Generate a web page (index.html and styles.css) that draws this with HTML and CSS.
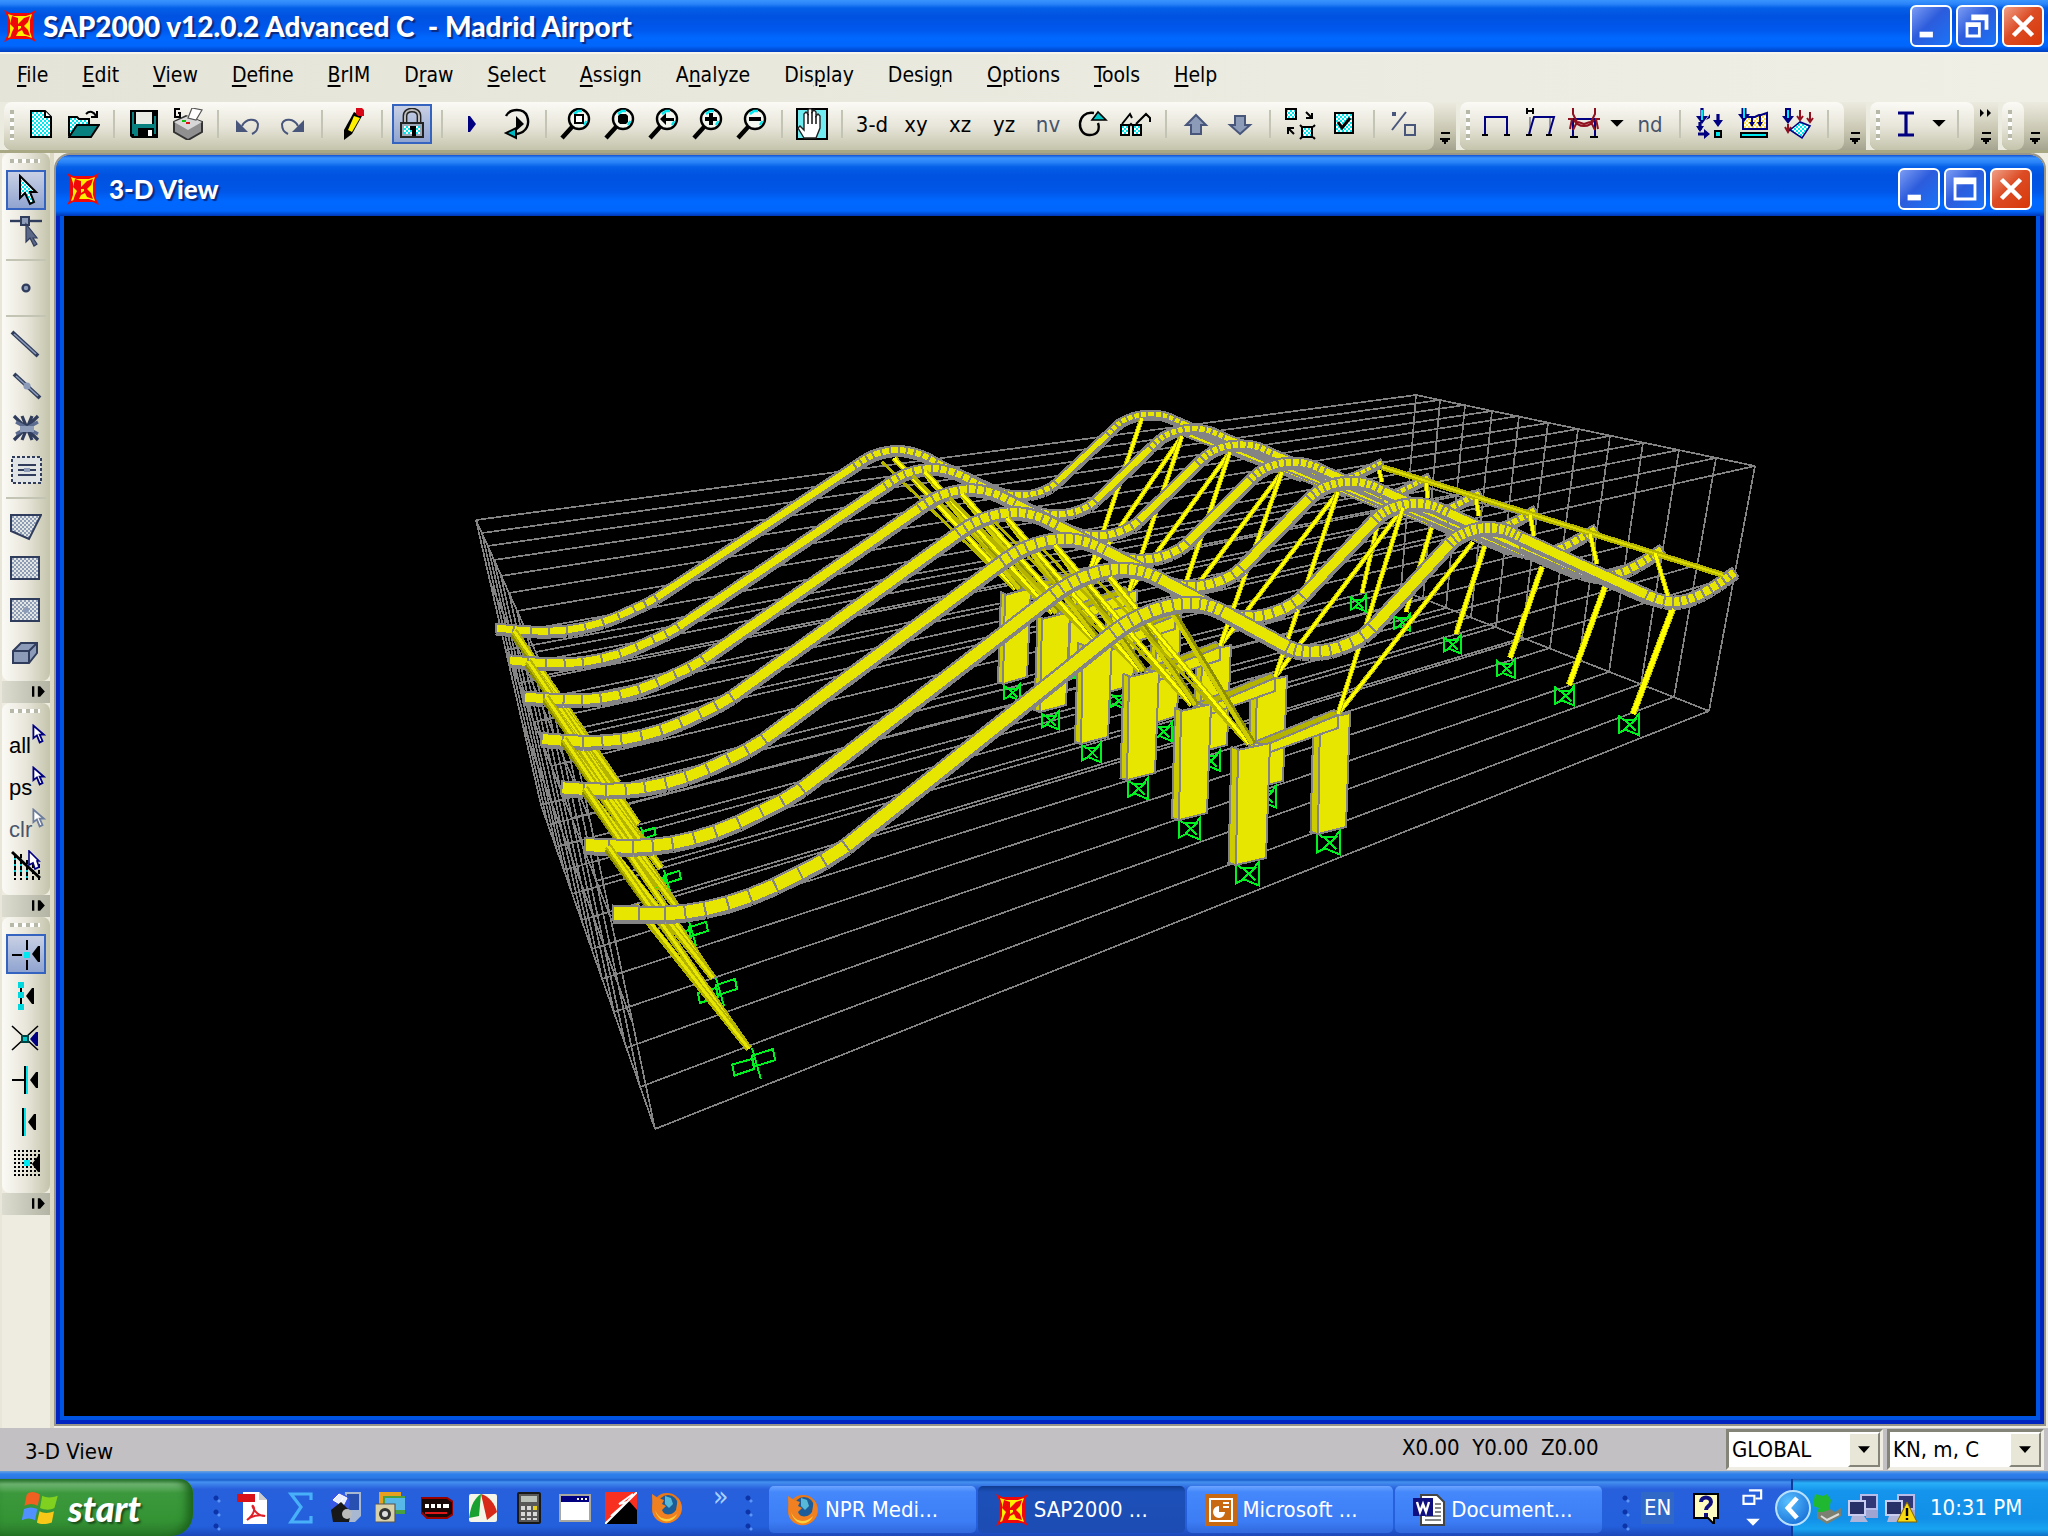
FILE: index.html
```html
<!DOCTYPE html>
<html lang="en">
<head>
    <meta charset="UTF-8">
    <title>SAP2000 - Madrid Airport</title>
    <link rel="stylesheet" href="styles.css">
</head>
<body>
    <!-- shared icon parts -->
    <svg class="defs" width="0" height="0" aria-hidden="true">
        <defs>
            <pattern id="cyan" width="2" height="2" patternUnits="userSpaceOnUse"><rect width="2" height="2" fill="#fff"/><path d="M0 0h1v1H0zM1 1h1v1H1z" fill="#00e8f0"/></pattern>
            <pattern id="gray" width="2" height="2" patternUnits="userSpaceOnUse"><rect width="2" height="2" fill="#e4e6e2"/><path d="M0 0h1v1H0zM1 1h1v1H1z" fill="#8c9cb8"/></pattern>
            <pattern id="yel" width="2" height="2" patternUnits="userSpaceOnUse"><rect width="2" height="2" fill="#fff"/><path d="M0 0h1v1H0zM1 1h1v1H1z" fill="#ffe040"/></pattern>
            <symbol id="sap" viewBox="0 0 16 16">
                <path d="M0 0l3 1.500h10L16 0l-1.500 3v10L16 16l-3-1.500H3L0 16l1.500-3V3z" fill="#f00808"/>
                <path d="M2 2l3 1h6l3-1-1 3v6l1 3-3-1H5l-3 1 1-3V5z" fill="#fff000"/>
                <path d="M4 3l3 1v3l3-3 3-1-1 3-2 2 2 2 1 3-3-1-1-2-2 1-1 2-3 1 1-3 1-2-2-2z" fill="#f00808"/>
                <path d="M7 8h1.500v1L7 10z" fill="#fff000"/>
            </symbol>
            <symbol id="mag" viewBox="0 0 16 16">
                <circle cx="9.500" cy="5.500" r="5" fill="#f4f6f0" stroke="#000" stroke-width="1.200"/>
                <path d="M7 3l2-1.500h2M12 8.500l1.200-2" fill="none" stroke="#00e8f0" stroke-width="1.200"/>
                <path d="M6 9.500L1 15" stroke="#000" stroke-width="2.200"/>
            </symbol>
            <symbol id="cursor" viewBox="0 0 10 14">
                <path d="M1 1v9l2.500-2 2 5 2-1-2-4.500H8.500z" fill="#fff" stroke="currentColor" stroke-width="1.300"/>
            </symbol>
            <symbol id="fox" viewBox="0 0 16 16">
                <circle cx="8" cy="8" r="7.500" fill="#e87818"/>
                <circle cx="8.500" cy="6.500" r="5" fill="#1c5c98"/>
                <path d="M7 2l3 1 1 3-2 2-2-2z" fill="#58b8d8"/>
                <path d="M0.500 1l3 2 3 1-1 2 2 1-2 2c1 3 5 3 7 0l1-6c3 4 2 9-2 11.500S2 15 .800 10.500z" fill="#f08020"/>
                <path d="M2 9c2 5 7 6 11 2-2 5-9 5.500-11-2z" fill="#f8d040"/>
            </symbol>
            <symbol id="over" viewBox="0 0 12 18"><path d="M2 2h9v2H2zM1 8h10v2H9v2H7v2H5v-2H3v-2H1z"/></symbol>
            <symbol id="pcs" viewBox="0 0 16 16">
                <path d="M6 1h9v8H6z" fill="#b8bce8"/><path d="M7 2h7v6H7z" fill="#303878"/>
                <path d="M9 9h6v4H9z" fill="#a0a4d0"/>
                <path d="M0 4h9v8H0z" fill="#c8ccf0"/><path d="M1 5h7v6H1z" fill="#283068"/>
                <path d="M2 12h6l2 3H1z" fill="#b0b4d8"/>
            </symbol>
        </defs>
    </svg>

    <header class="titlebar">
        <svg class="ico"><use href="#sap"/></svg>
        <h1>SAP2000 v12.0.2 Advanced C &nbsp;- Madrid Airport</h1>
        <button class="cap" aria-label="Minimize"><svg viewBox="0 0 20 20"><path d="M4 13h7v3H4z"/></svg></button>
        <button class="cap" aria-label="Restore"><svg viewBox="0 0 20 20"><path d="M7 4h9v8h-2V7H7zM4 8h8v8H4zM5.500 10.500v4h5v-4z" fill-rule="evenodd"/></svg></button>
        <button class="cap close" aria-label="Close"><svg viewBox="0 0 20 20"><path d="M5 5l10 10M15 5L5 15" stroke="#fff" stroke-width="2.400"/></svg></button>
    </header>

    <nav class="menubar">
        <button><u>F</u>ile</button>
        <button><u>E</u>dit</button>
        <button><u>V</u>iew</button>
        <button><u>D</u>efine</button>
        <button><u>B</u>rIM</button>
        <button>D<u>r</u>aw</button>
        <button><u>S</u>elect</button>
        <button><u>A</u>ssign</button>
        <button>A<u>n</u>alyze</button>
        <button>Dis<u>p</u>lay</button>
        <button>Desi<u>g</u>n</button>
        <button><u>O</u>ptions</button>
        <button><u>T</u>ools</button>
        <button><u>H</u>elp</button>
    </nav>

    <div class="toolbars">
        <div class="toolbar">
            <div class="tools">
                <i class="grip"></i>
                <button aria-label="New"><svg viewBox="0 0 16 16"><path d="M3.500 1.500h7l3 3v10h-10z" fill="url(#cyan)" stroke="#000"/><path d="M10.500 1.500v3h3" fill="#fff" stroke="#000"/></svg></button>
                <button aria-label="Open"><svg viewBox="0 0 16 16"><path d="M.500 14V4.500h4l1 1h5V9" fill="url(#cyan)" stroke="#000"/><path d="M.500 14.500l4-6h11l-4 6z" fill="#088080" stroke="#000"/><path d="M9 3c2-2 4-1 5 1M14.500 1.500v3h-3" fill="none" stroke="#000"/></svg></button>
                <i class="sep"></i>
                <button aria-label="Save"><svg viewBox="0 0 16 16"><path d="M1 1h14v14H2l-1-1z"/><path d="M2 2h1v11H2zM13 4h1v9h-1zM3 8h10v2H3zM3 10h2v4H3z" fill="#088080"/><path d="M4 2h8v6H4z" fill="#e8ebe4"/><path d="M10 11h2v3h-2z" fill="#fff"/></svg></button>
                <button aria-label="Print graphics"><svg viewBox="0 0 16 16"><path d="M1 7l6-3 8 3v5l-7 4-7-4z" fill="#909090" stroke="#333"/><path d="M1 7l7 4 7-4-7-3z" fill="#d8d8d8"/><path d="M8 5l2-5 5 1-3 5z" fill="#fff" stroke="#555" stroke-width=".6"/><path d="M7 7h2v1H7z" fill="#e01010"/><path d="M5 6h2v1H5z" fill="#10c010"/><path d="M4 .500H1.500v4H4v-2H3" fill="none" stroke="#000"/></svg></button>
                <i class="sep"></i>
                <button aria-label="Undo"><svg viewBox="0 0 16 16"><path d="M2 6v6h6z" fill="#48567c"/><path d="M5 9c2-4 7-4 8-1 0 3-1 4-3 5" fill="none" stroke="#48567c"/></svg></button>
                <button aria-label="Redo"><svg viewBox="0 0 16 16"><path d="M14 6v6H8z" fill="#48567c"/><path d="M11 9C9 5 4 5 3 8c0 3 1 4 3 5" fill="none" stroke="#48567c"/></svg></button>
                <i class="sep"></i>
                <button aria-label="Refresh window"><svg viewBox="0 0 16 16"><path d="M9 2l4 2-5 9-4 3V11z"/><path d="M9 4l3 1-4 7-2-1z" fill="#fff000"/><path d="M10 0h3l1 1v3h-3l-1-1z" fill="#d80818"/></svg></button>
                <i class="sep"></i>
                <button class="on" aria-label="Lock model"><svg viewBox="0 0 16 16"><path d="M4.500 8V4c0-4 7-4 7 0v4" fill="none" stroke="#222" stroke-width="2.400"/><path d="M4.500 8V4c0-4 7-4 7 0v4" fill="none" stroke="#bbb"/><path d="M2.500 7.500h11v7h-11z" fill="#9aa8b8" stroke="#222"/><path d="M4 9h8v4H4z" fill="url(#cyan)"/><path d="M7 9h3v5H8v-3H7z"/></svg></button>
                <i class="sep"></i>
                <button aria-label="Run analysis"><svg viewBox="0 0 16 16"><path d="M6 4h1l3 4-3 4H6z" fill="#000080"/></svg></button>
                <button aria-label="Run animation"><svg viewBox="0 0 16 16"><path d="M3 4c2-4 9-4 10.500 0s0 8-5 9" fill="none" stroke="#000" stroke-width="1.200"/><path d="M8 4l4 4-4 3.500z"/><path d="M8 10v5l-5-2.500z" fill="#00b8c0" stroke="#000"/></svg></button>
                <i class="sep"></i>
                <button aria-label="Rubber band zoom"><svg><use href="#mag"/><path transform="scale(2)" d="M7.500 3.500h4v4h-4z" fill="#fff" stroke="#000"/></svg></button>
                <button aria-label="Restore full view"><svg><use href="#mag"/><path transform="scale(2)" d="M8 3h3l1 1v3l-1 1H8L7 7V4z"/></svg></button>
                <button aria-label="Restore previous zoom"><svg><use href="#mag"/><path transform="scale(2)" d="M6 5.500L9 2.500V5h4v1.500H9v2z"/></svg></button>
                <button aria-label="Zoom in"><svg><use href="#mag"/><path transform="scale(2)" d="M6.500 4.500h2v-2h2v2h2v2h-2v2h-2v-2h-2z"/></svg></button>
                <button aria-label="Zoom out"><svg><use href="#mag"/><path transform="scale(2)" d="M6.500 4.500h6v2h-6z"/></svg></button>
                <i class="sep"></i>
                <button aria-label="Pan"><svg viewBox="0 0 16 16"><path d="M.500 .500h15v15H.500z" fill="#70ecf0" stroke="#000"/><path d="M4 15l-3-5 1-1 2 2V3l1-1 1 1V1l1-1 1 1v1l1-1 1 1v2l1-1 1 1v6l-2 5z" fill="#fff" stroke="#222" stroke-width=".7"/><path d="M6 3v5M8 2v6M10 4v4" stroke="#000" stroke-width=".7"/></svg></button>
                <i class="sep"></i>
                <button>3-d</button>
                <button>xy</button>
                <button>xz</button>
                <button>yz</button>
                <button class="dim">nv</button>
                <button aria-label="Rotate 3D view"><svg viewBox="0 0 16 16"><path d="M9 2.500C0 1 0 14 7 13.500c4 0 5-3 4-6" fill="none" stroke="#000" stroke-width="1.200"/><path d="M8 6l3-4 4 4z" fill="#00c8c8" stroke="#000" stroke-width=".8"/></svg></button>
                <button aria-label="Perspective toggle"><svg viewBox="0 0 16 16"><path d="M1 8l4-5 1 2M8 8l5-5 2 2v2M4.500 9l1-1 1 1" fill="none" stroke="#000"/><path d="M.500 8.500h4v5h-4zM6.500 8.500h4v5h-4z" fill="url(#cyan)" stroke="#000"/></svg></button>
                <i class="sep"></i>
                <button aria-label="Move up in list"><svg viewBox="0 0 16 16"><path d="M8 3.500l5 5h-2.500V13h-5V8.500H3z" fill="#8c9cb8" stroke="#48567c"/></svg></button>
                <button aria-label="Move down in list"><svg viewBox="0 0 16 16"><path d="M8 13l5-4.500h-2.500V4h-5v4.500H3z" fill="#8c9cb8" stroke="#48567c"/></svg></button>
                <i class="sep"></i>
                <button aria-label="Object shrink toggle"><svg viewBox="0 0 16 16"><path d="M1 .500h5v5H1zM9 9.500h5v5H9z" fill="url(#cyan)" stroke="#000"/><path d="M11 2l3 3M14 2.500V5h-3M2 10l3 3M2 13V10h3M8 8.500l1 1M15.500 8.500l-1 1M8 15.500l1-1M15.500 15.500l-1-1" fill="none" stroke="#000"/></svg></button>
                <button aria-label="Set display options"><svg viewBox="0 0 16 16"><path d="M3.500 2.500h9v10h-9z" fill="url(#cyan)" stroke="#000"/><path d="M5 7l2 3 4-5" fill="none" stroke="#000" stroke-width="1.500"/></svg></button>
                <i class="sep"></i>
                <button aria-label="Assign to group"><svg viewBox="0 0 16 16"><path d="M2 11l7-9" stroke="#48567c"/><path d="M2 2h2v2H2z" fill="#48567c"/><path d="M8.500 8.500h5v5h-5z" fill="none" stroke="#48567c"/></svg></button>
            </div>
            <button class="over" aria-label="Toolbar options"><svg><use href="#over"/></svg></button>
        </div>
        <div class="toolbar">
            <div class="tools">
                <i class="grip"></i>
                <button aria-label="Show undeformed shape"><svg viewBox="0 0 16 16"><path d="M2.500 13V4.500h11V13" fill="none" stroke="#000080"/><path d="M1 13h3v1H1zM12 13h3v1h-3z"/></svg></button>
                <button aria-label="Show deformed shape"><svg viewBox="0 0 16 16"><path d="M3 4.500V13M13 5v8" stroke="#999"/><path d="M2.500 13L5 4.500h10L12.500 13" fill="none" stroke="#000080"/><path d="M1 13h3v1H1zM11 13h3v1h-3zM1 0h1v3H1zM4 0h1v3H4zM1 1h4v1H1z"/></svg></button>
                <button aria-label="Show forces"><svg viewBox="0 0 16 16"><path d="M2.500 14V5.500h11V14" fill="none" stroke="#000080"/><path d="M2.500 0v3l2 4-2 4M13.500 0v3l-2 4 2 4M0 5.500h2l-1 5M16 5.500h-2l1 5M3 6c2 4 8 4 10 0M5 7l3 1 3-1" fill="none" stroke="#901020"/><path d="M1 14h4v1H1zM11 14h4v1h-4z"/></svg></button>
                <button class="drop" aria-label="Force options"><svg viewBox="0 0 10 6"><path d="M0 0h10L5 5z"/></svg></button>
                <button class="dim">nd</button>
                <i class="sep"></i>
                <button aria-label="Joint loads"><svg viewBox="0 0 16 16"><path d="M4 0v5M12 3v5M3 7v4M2 13h4" stroke="#000080" stroke-width="1.600"/><path d="M1 4h6L4 8zM9.500 6h5L12 9.500zM1 9h4l-2 3zM5 10.500l3 2.500-3 2.500zM6 6l2-3v2z" fill="#000080"/><path d="M4 1v5" stroke="#00e8f0"/><path d="M10.500 11.500h3v3h-3z" fill="#00e8f0" stroke="#000"/></svg></button>
                <button aria-label="Frame loads"><svg viewBox="0 0 16 16"><path d="M2.500 4.500h6l2-1 1 0 3-1v8h-12z" fill="url(#yel)" stroke="#000080"/><path d="M3 0v4" stroke="#000080" stroke-width="2.500"/><path d="M7 4v5M11 4v5" stroke="#000080"/><path d="M0 3h6L3 7zM5.500 7h3L7 9.500zM9.500 7h3L11 9.500z" fill="#000080"/><path d="M3 0v5" stroke="#00e8f0"/><path d="M1.500 12.500h13v2h-13z" fill="#00e8f0" stroke="#000"/></svg></button>
                <button aria-label="Area loads"><svg viewBox="0 0 16 16"><path d="M3 0v4" stroke="#000080" stroke-width="3"/><path d="M0 4h6L3 8z" fill="#000080"/><path d="M3 1v4" stroke="#00e8f0"/><path d="M9 1v5M14 2v5M7.500 4L9 6l1.500-2M12.500 5L14 7l1.500-2M3 8v4M1.500 9.500L3 12l1.500-2.500" fill="none" stroke="#901020"/><path d="M4 11l5-4 5 2-4 6z" fill="url(#cyan)" stroke="#000080" stroke-width=".8"/></svg></button>
                <i class="sep"></i>
            </div>
            <button class="over" aria-label="Toolbar options"><svg><use href="#over"/></svg></button>
        </div>
        <div class="toolbar">
            <div class="tools">
                <i class="grip"></i>
                <button aria-label="Steel frame design"><svg viewBox="0 0 16 16"><path d="M4 2.500h8M4 13.500h8M8 2v12" stroke="#000080" stroke-width="1.600"/></svg></button>
                <button class="drop" aria-label="Design options"><svg viewBox="0 0 10 6"><path d="M0 0h10L5 5z"/></svg></button>
                <i class="sep"></i>
            </div>
            <button class="over more" aria-label="More tools"><svg class="dbl" viewBox="0 0 12 8"><path d="M0 0l4 4-4 4zM7 0l4 4-4 4z"/></svg><svg><use href="#over"/></svg></button>
        </div>
        <div class="toolbar">
            <div class="tools"><i class="grip"></i></div>
            <button class="over" aria-label="Toolbar options"><svg><use href="#over"/></svg></button>
        </div>
    </div>

    <div class="work">
        <aside class="side">
            <div class="vbar">
                <i class="grip"></i>
                <button class="on" aria-label="Select"><svg viewBox="0 0 16 16"><path d="M5 1v11l2.500-2.500L10 15l2-1-2-5h3z" fill="url(#cyan)" stroke="#000"/></svg></button>
                <button aria-label="Reshape object"><svg viewBox="0 0 16 16"><path d="M0 2.500h16" stroke="#303c5c" stroke-width="1.200"/><path d="M5.500 .500h4v4h-4z" fill="#8c9cb8" stroke="#303c5c"/><path d="M8 4v9l2-2 2 4 1.500-1-2-3h2z" fill="#5c6888" stroke="#303c5c" stroke-width=".6"/></svg></button>
                <i class="sep"></i>
                <button aria-label="Draw joint"><svg viewBox="0 0 16 16"><circle cx="8" cy="8" r="1.700" fill="#8c9cb8" stroke="#303c5c" stroke-width="1.200"/></svg></button>
                <i class="sep"></i>
                <button aria-label="Draw frame"><svg viewBox="0 0 16 16"><path d="M1 2l13 12" stroke="#303c5c" stroke-width="2"/><path d="M2 3l11 10" stroke="#8c9cb8" stroke-width=".8"/></svg></button>
                <button aria-label="Quick draw frame"><svg viewBox="0 0 16 16"><path d="M2 2l13 12" stroke="#303c5c" stroke-width="2"/><path d="M3 3l11 10" stroke="#8c9cb8" stroke-width=".8"/><circle cx="8.500" cy="8" r="1.800" fill="#8c9cb8"/></svg></button>
                <button aria-label="Quick draw braces"><svg viewBox="0 0 16 16"><path d="M2 2l12 12M14 2L2 14M6 2l5 12M11 2L6 14" stroke="#303c5c" stroke-width="1.600"/><path d="M3 5l11 6M14 5L3 11" stroke="#5c6c90" stroke-width="1.600"/><path d="M5 7h7v3H5z" fill="#8c9cb8"/></svg></button>
                <button aria-label="Quick draw secondary beams"><svg viewBox="0 0 16 16"><path d="M1 1.500h14.500v13H1z" fill="#e0e4e4" stroke="#303c5c" stroke-dasharray="1.500 1"/><path d="M4 5.500h9M4 8h9M4 10.500h9" stroke="#303c5c"/><path d="M7 7h3v2H7z" fill="#8c9cb8"/></svg></button>
                <i class="sep"></i>
                <button aria-label="Draw poly area"><svg viewBox="0 0 16 16"><path d="M.500 2.500h15L9.500 14.500l-9-4z" fill="url(#gray)" stroke="#303c5c"/></svg></button>
                <button aria-label="Draw rectangular area"><svg viewBox="0 0 16 16"><path d="M.500 2.500h14v11h-14z" fill="url(#gray)" stroke="#303c5c"/></svg></button>
                <button aria-label="Quick draw area"><svg viewBox="0 0 16 16"><path d="M.500 2.500h14v11h-14z" fill="url(#gray)" stroke="#303c5c"/><circle cx="8" cy="8" r="1.500" fill="#8c9cb8"/></svg></button>
                <button aria-label="Draw solid"><svg viewBox="0 0 16 16"><path d="M1.500 7.500l4-4h8v5l-4 5h-8zM1.500 7.500h8v6M9.500 7.500l4-4" fill="#8c9cb8" stroke="#303c5c"/></svg></button>
            </div>
            <button class="vover" aria-label="Toolbar options"><svg viewBox="0 0 12 10"><path d="M0 0h2v9H0zM5 0h2l4 4.500L7 9H5z"/></svg></button>
            <div class="vbar">
                <i class="grip"></i>
                <button class="word">all<svg class="over-cur"><use href="#cursor"/></svg></button>
                <button class="word">ps<svg class="over-cur"><use href="#cursor"/></svg></button>
                <button class="word dim">clr<svg class="over-cur"><use href="#cursor"/></svg></button>
                <button aria-label="Intersecting line selection"><svg viewBox="0 0 16 16"><path d="M2.500 2v13M5.500 2v13M8.500 5v10M11.500 7v8M14.500 7v8" stroke="#000" stroke-dasharray="2 1"/><path d="M2.500 4v9M5.500 4v9M8.500 7v7" stroke="#00c8d0" stroke-dasharray="1 2"/><path d="M1 1l14 13" stroke="#000" stroke-width="1.500"/><path d="M9.500 .500v7l2-1 1 3 2-1-1-3h1z" fill="#fff" stroke="#000080" stroke-width=".8"/></svg></button>
            </div>
            <button class="vover" aria-label="Toolbar options"><svg viewBox="0 0 12 10"><path d="M0 0h2v9H0zM5 0h2l4 4.500L7 9H5z"/></svg></button>
            <div class="vbar">
                <i class="grip"></i>
                <button class="on" aria-label="Snap to points"><svg viewBox="0 0 16 16"><path d="M1 8.500h5M8.500 1v5M8.500 11v5" stroke="#000"/><path d="M7 7h3v3H7z" fill="#00e8f0"/><path d="M15 4v8h-1l-3-4 3-4z"/></svg></button>
                <button aria-label="Snap to midpoints"><svg viewBox="0 0 16 16"><path d="M5.500 1v14" stroke="#000"/><path d="M4 1h3v3H4zM4 6h3v3H4zM4 12h3v3H4z" fill="#00d8e0"/><path d="M12 4v8h-1L8 8l3-4z"/></svg></button>
                <button aria-label="Snap to intersections"><svg viewBox="0 0 16 16"><path d="M1 2l13 12M14 2L1 14" stroke="#000" stroke-width=".8"/><path d="M6 7h3v3H6z" fill="#00c8c8" stroke="#044"/><path d="M14 5v7h-1l-3-3.500L13 5z" fill="#000080"/></svg></button>
                <button aria-label="Snap perpendicular"><svg viewBox="0 0 16 16"><path d="M1 8h7M7.500 1v14" stroke="#000"/><path d="M8.500 1v14" stroke="#00e8f0"/><path d="M14 4v8h-1l-3-4 3-4z"/></svg></button>
                <button aria-label="Snap to lines"><svg viewBox="0 0 16 16"><path d="M6.500 1v14" stroke="#000"/><path d="M7.500 1v14" stroke="#00e8f0"/><path d="M13 4v8h-1L9 8l3-4z"/></svg></button>
                <button aria-label="Snap to fine grid"><svg viewBox="0 0 16 16"><path d="M2 1.500h13M2 3.500h13M2 5.500h13M2 7.500h13M2 9.500h13M2 11.500h13M2 13.500h13" stroke="#000" stroke-dasharray="1 1"/><path d="M7 6h3v3H7z" fill="#00e8f0"/><path d="M15 4v8h-1l-3-4 3-4z"/></svg></button>
            </div>
            <button class="vover" aria-label="Toolbar options"><svg viewBox="0 0 12 10"><path d="M0 0h2v9H0zM5 0h2l4 4.500L7 9H5z"/></svg></button>
        </aside>

        <main class="child">
            <div class="titlebar inner">
                <svg class="ico"><use href="#sap"/></svg>
                <h2>3-D View</h2>
                <button class="cap" aria-label="Minimize view"><svg viewBox="0 0 20 20"><path d="M4 13h7v3H4z"/></svg></button>
                <button class="cap" aria-label="Maximize view"><svg viewBox="0 0 20 20"><path d="M4 4h12v12H4zM5.500 7.500v7h9v-7z" fill-rule="evenodd"/></svg></button>
                <button class="cap close" aria-label="Close view"><svg viewBox="0 0 20 20"><path d="M5 5l10 10M15 5L5 15" stroke="#fff" stroke-width="2.400"/></svg></button>
            </div>
            <svg id="model" viewBox="64 216 1972 1200" role="img" aria-label="Roof model"></svg>
        </main>
    </div>

    <footer class="status">
        <span class="msg">3-D View</span>
        <output>X0.00 &nbsp;Y0.00 &nbsp;Z0.00</output>
        <label class="pick"><select aria-label="Coordinate system"><option>GLOBAL</option></select><svg viewBox="0 0 16 9"><path d="M0 0h16L8 9z"/></svg></label>
        <label class="pick"><select aria-label="Units"><option>KN, m, C</option></select><svg viewBox="0 0 16 9"><path d="M0 0h16L8 9z"/></svg></label>
    </footer>

    <div class="taskbar">
        <button class="start">
            <svg viewBox="0 0 18 18"><path d="M3 3c2-2 4-1 6 0L8 8c-2-1-4-1-6 0z" fill="#f06020"/><path d="M10 3.500c2 1 4 1 7 0L15.500 9c-2 1-4 1-6.500 0z" fill="#80d020"/><path d="M1.800 9.500c2-1 4-1 6 0l-1 5c-2-1-4-1-6 0z" fill="#5090ff"/><path d="M8.800 10.500c2 1 4 1 6.500 0l-1 5c-3 1-5 1-6.700 0z" fill="#f8c818"/></svg>
            start
        </button>
        <i class="dots"></i>
        <div class="quick">
            <a href="#pdf" aria-label="Acrobat"><svg viewBox="0 0 16 16"><path d="M3 0h8l4 4v12H3z" fill="#fff"/><path d="M11 0v4h4" fill="#ccc"/><path d="M0 1h9v4H0z" fill="#d81018"/><path d="M5 14c4-3 4-6 3-7s1 5 6 5c-3-1-7 0-9 2z" fill="none" stroke="#e02028"/></svg></a>
            <a href="#math" aria-label="Math"><svg viewBox="0 0 16 16"><path d="M14 4V1H4l5 6.500L4 15h10v-3" fill="none" stroke="#48b0f8" stroke-width="1.600"/></svg></a>
            <a href="#sim" aria-label="Player"><svg viewBox="0 0 16 16"><path d="M8 0h8v12l-3 3H7z" fill="#a8b8d0"/><path d="M9 1h6v8H9z" fill="#2850b0"/><circle cx="5.500" cy="5.500" r="5" fill="#3858e8"/><path d="M2 4l3-3 4 2-2 4zM4 8l3-5" fill="#e8ecff" stroke="#fff" stroke-width=".5"/><path d="M1 9l5-4 5 5-1 5H2z" fill="#181818"/><circle cx="9" cy="11" r="2.500" fill="#bbb"/></svg></a>
            <a href="#photos" aria-label="Photos"><svg viewBox="0 0 16 16"><path d="M2 0h11v9H2z" fill="#e8a020"/><path d="M4 2h11v9H4z" fill="#48a040"/><path d="M5 3h10v6H5z" fill="#58b8e8"/><path d="M0 6h10v9H0z" fill="#d8d0a8" stroke="#555" stroke-width=".6"/><circle cx="5" cy="11" r="3" fill="#333"/><circle cx="5" cy="11" r="1.500" fill="#ddd"/></svg></a>
            <a href="#red" aria-label="Toolbox"><svg viewBox="0 0 16 16"><path d="M0 3h13l3 2v6l-3 2H3L0 10z" fill="#180808" stroke="#900"/><path d="M2 7h2M5 7h2M8 7h2M11 7h3" stroke="#fff" stroke-width="2"/><path d="M2 10.500h11" stroke="#e01818"/></svg></a>
            <a href="#umb" aria-label="Viewer"><svg viewBox="0 0 16 16"><rect x="1" y="1" width="14" height="14" rx="1" fill="#f4f4e8"/><path d="M1 13C2 6 4 3 7 1L6 12z" fill="#18a030"/><path d="M7 1c4 1 7 5 8 9l-5 4z" fill="#d82818"/></svg></a>
            <a href="#calc" aria-label="Calculator"><svg viewBox="0 0 16 16"><rect x="2" y="0" width="12" height="16" rx="1" fill="#181818"/><path d="M3 1h10v14H3z" fill="#585858"/><path d="M4 2h8v3H4z" fill="#b8c0b8"/><path d="M4 7h2v2H4zM7 7h2v2H7zM4 10h2v2H4zM7 10h2v2H7zM4 13h2v1H4zM7 13h2v1H7zM10 10h2v2h-2zM10 13h2v1h-2z" fill="#d8d8d8"/><path d="M10 7h2v2h-2z" fill="#e8d020"/></svg></a>
            <a href="#desk" aria-label="Window"><svg viewBox="0 0 16 16"><path d="M0 1h16v14H0z" fill="#a8a8a0"/><path d="M1 2h14v12H1z" fill="#fff"/><path d="M1 2h14v3H1z" fill="#000080"/><path d="M9 3h1v1H9zM11 3h1v1h-1zM13 3h1v1h-1z" fill="#fff"/></svg></a>
            <a href="#cad" aria-label="Drafting"><svg viewBox="0 0 16 16"><path d="M0 0h16L0 16z" fill="#f83020"/><path d="M16 0v16H0z"/><path d="M8 0h8v9z" fill="#f83020"/><path d="M16 0L0 16M14 1L7 6l4-1-8 7" fill="none" stroke="#fff"/></svg></a>
            <a href="#fox" aria-label="Firefox"><svg><use href="#fox"/></svg></a>
            <span class="raq">»</span>
        </div>
        <i class="dots"></i>
        <div class="tasks">
            <button><svg><use href="#fox"/></svg>NPR Medi...</button>
            <button class="active"><svg><use href="#sap"/></svg>SAP2000 ...</button>
            <button><svg viewBox="0 0 16 16"><path d="M0 0h16v16H0z" fill="#c86810"/><path d="M2.500 2.500h11v11h-11z" fill="none" stroke="#fff"/><path d="M7 6v3h3a3 3 0 1 1-3-3zM9 4h3v1H9zM9 6h3v1H9z" fill="#fff"/></svg>Microsoft ...</button>
            <button><svg viewBox="0 0 16 16"><path d="M4 .500h8l3.500 3.500v11.500H4z" fill="#fff" stroke="#444"/><path d="M11 5h3M11 7h3M11 9h3M6 11h8M6 13h8" stroke="#888"/><path d="M0 2h10v9H0z" fill="#101080"/><path d="M2 4l1.500 5L5 5l1.500 4L8 4" fill="none" stroke="#fff" stroke-width="1.200"/></svg>Document...</button>
        </div>
        <i class="dots"></i>
        <div class="lang">
            <span class="en">EN</span>
            <svg class="help" viewBox="0 0 16 16"><path d="M2 1h12v12h-2v3l-3-3H2z" fill="#fffcc0" stroke="#000"/><path d="M5.500 5c0-3 5-3 5 0 0 2-2.500 2-2.500 4M8 10.500v2" fill="none" stroke="#101080" stroke-width="2"/></svg>
            <svg class="resize" viewBox="0 0 16 28"><path d="M5 1h9v6h-4M1 5h8v6H1z" fill="none" stroke="#fff" stroke-width="1.600"/><path d="M3 22h10l-5 5z" fill="#fff"/></svg>
        </div>
        <div class="tray">
            <button class="hide" aria-label="Hide inactive icons"><svg viewBox="0 0 16 16"><path d="M10 3L5.500 8l4.500 5" fill="none" stroke="#fff" stroke-width="2.400"/></svg></button>
            <svg viewBox="0 0 16 16"><path d="M3 10l4-3 5 3 3-2v4l-7 4-5-3z" fill="#7c8070"/><path d="M5 12l3 2 6-3" fill="none" stroke="#ddd"/><path d="M2 1l4 1 2-1 2 3-1 5-3 1H3l1-2-3-1z" fill="#20b830"/></svg>
            <svg viewBox="0 0 16 16"><use href="#pcs"/></svg>
            <svg viewBox="0 0 16 16"><use href="#pcs"/><path d="M11 5l5 10H6z" fill="#f8d810" stroke="#806000" stroke-width=".5"/><path d="M11 8v4M11 13v1" stroke="#000" stroke-width="1.200"/></svg>
            <time>10:31 PM</time>
        </div>
    </div>

    <script src="model.js"></script>
</body>
</html>
```

FILE: styles.css
```css
* {
    box-sizing: border-box;
}

body {
    margin: 0;
    height: 100vh;
    display: flex;
    flex-direction: column;
    overflow: hidden;
    background: #ece9d8;
    font-family: "DejaVu Sans Condensed", "Open Sans", sans-serif;
    font-size: 22px;
    color: #000;
}

button {
    font: inherit;
    color: inherit;
    border: none;
    background: none;
    padding: 0;
    flex: none;
    white-space: nowrap;
}

svg {
    display: block;
    flex: none;
    width: 32px;
    height: 32px;
}

.defs {
    position: absolute;
    width: 0;
    height: 0;
}

/* title bars */
.titlebar {
    display: flex;
    align-items: center;
    gap: 4px;
    height: 52px;
    padding: 0 4px;
    background: linear-gradient(#3a94ff, #2a84f8 4px, #0560e8 8px, #0052e0 16px, #0058ee 30px, #0068ff 38px, #0066fc 46px, #0040c0);
    flex: none;
}

.titlebar h1, .titlebar h2 {
    flex: 1;
    margin: 0 0 0 3px;
    font-family: Lato, "Open Sans", sans-serif;
    font-size: 28px;
    line-height: 32px;
    font-weight: 900;
    color: #fff;
    text-shadow: 2px 2px 1px #0a2a80;
}

.titlebar h2 {
    margin-left: 6px;
    font-size: 26px;
}

.titlebar.inner {
    height: 61px;
    margin: 0 -4px;
    padding: 6px 12px 0 11px;
    border-radius: 14px 14px 0 0;
    background: linear-gradient(#1050d0, #3a94ff 3px, #2a84f8 7px, #0560e8 12px, #0052e0 20px, #0056e8 36px, #0068ff 46px, #0066fc 56px, #0038b8);
}

.cap {
    width: 42px;
    height: 42px;
    border: 2px solid #fff;
    border-radius: 6px;
    background: linear-gradient(135deg, #7c9cf4, #2c5cdc 45%, #1a74f8);
    display: grid;
    place-items: center;
}

.cap svg {
    width: 38px;
    height: 38px;
    fill: #fff;
}

.cap.close {
    background: linear-gradient(135deg, #f0a088, #dc4c24 45%, #d83808);
}

/* menu */
.menubar {
    display: flex;
    height: 50px;
    border-top: 2px solid #f6f4ec;
    background: linear-gradient(90deg, #e4e4d8, #efefe6);
    flex: none;
}

.menubar button {
    padding: 0 17px;
    font-size: 21px;
    line-height: 40px;
    height: 42px;
}

u {
    text-decoration-thickness: 2px;
    text-underline-offset: 3px;
}

/* horizontal toolbars */
.toolbars {
    display: flex;
    gap: 4px;
    height: 51px;
    padding-left: 4px;
    background: #ecebe0;
    border-bottom: 3px solid #a8a884;
    flex: none;
}

.toolbar {
    display: flex;
    height: 48px;
    background: linear-gradient(#ecebe0, #c8c6b0 60%, #a4a490);
    border-radius: 8px 0 0 8px;
}

.toolbar:last-child {
    flex: 1;
}

.tools {
    display: flex;
    align-items: center;
    height: 48px;
    padding: 0 8px 4px 14px;
    position: relative;
    border-radius: 8px;
    background: linear-gradient(#fbfaf5, #e8e6da 50%, #c4c4ac);
}

.tools button {
    width: 40px;
    height: 40px;
    margin: 0 2px;
    display: grid;
    place-items: center;
}

.tools .drop {
    width: 22px;
    margin: 0;
}

.drop svg {
    width: 14px;
    height: 8px;
}

.tools .on, .vbar .on {
    border: 2px solid #3464c0;
    background: linear-gradient(#c8d0e4, #90a4d0);
}

.tools .dim, .vbar .dim {
    color: #48546c;
}

.tools .sep {
    width: 2px;
    height: 28px;
    margin: 0 7px;
    background: #c4c4b4;
}

.tools .grip {
    position: absolute;
    left: 6px;
    top: 8px;
    width: 4px;
    height: 30px;
    background: repeating-linear-gradient(#b8b8a8 0 4px, #fff 4px 8px);
}

.over {
    width: 22px;
    display: flex;
    flex-direction: column;
    justify-content: flex-end;
    align-items: center;
    padding-bottom: 2px;
}

.over svg {
    width: 14px;
    height: 18px;
}

.over.more {
    width: 24px;
    justify-content: space-between;
    padding-top: 7px;
}

.over .dbl {
    height: 8px;
}

/* work area */
.work {
    display: flex;
    flex: 1;
    min-height: 0;
    background: #f0eee2;
}

.side {
    width: 54px;
    padding: 0 4px 0 2px;
    background: linear-gradient(90deg, #e8e6d8 0 2px, #eeece0 2px 50px, #dcdac4 50px);
    flex: none;
}

.vbar {
    position: relative;
    display: flex;
    flex-direction: column;
    padding: 16px 4px 8px;
    border-radius: 8px;
    background: linear-gradient(90deg, #fbfaf5, #e8e6da 50%, #c4c4ac);
}

.vbar button {
    position: relative;
    width: 40px;
    height: 40px;
    margin: 1px 0;
    display: grid;
    place-items: center;
}

.vbar .sep {
    width: 40px;
    height: 2px;
    margin: 6px 0;
    background: #c4c4b4;
}

.vbar .grip {
    position: absolute;
    left: 8px;
    top: 6px;
    width: 30px;
    height: 4px;
    background: repeating-linear-gradient(90deg, #b8b8a8 0 4px, #fff 4px 8px);
}

.vbar .word {
    place-items: end start;
    padding-left: 3px;
    line-height: 28px;
    font-family: "Liberation Sans", sans-serif;
}

.over-cur {
    position: absolute;
    right: 0;
    top: 4px;
    width: 14px;
    height: 20px;
    color: #000080;
}

.dim .over-cur {
    color: #6c7c9c;
}

.vover {
    display: flex;
    justify-content: flex-end;
    align-items: center;
    width: 48px;
    height: 22px;
    padding-right: 4px;
    background: linear-gradient(90deg, #dcdcd0, #b4b4a4);
}

.vover svg {
    width: 14px;
    height: 12px;
}

.child {
    flex: 1;
    min-width: 0;
    display: flex;
    flex-direction: column;
    margin: 2px 4px 4px 2px;
    border: 4px solid #0024c0;
    border-top: none;
    border-radius: 14px 14px 0 0;
    background: #0024c0;
    outline: 2px solid #98968a;
}

#model {
    flex: 1;
    min-height: 0;
    width: auto;
    height: auto;
    background: #000;
    border: 4px solid #0054e4;
    border-top: none;
    shape-rendering: crispEdges;
}

/* status bar */
.status {
    display: flex;
    align-items: center;
    height: 43px;
    padding-right: 4px;
    gap: 4px;
    background: #c2c0c2;
    flex: none;
}

.msg {
    flex: 1;
    padding: 4px 0 0 25px;
}

.status output {
    width: 320px;
    padding-bottom: 4px;
}

.pick {
    position: relative;
    display: flex;
    width: 157px;
    height: 41px;
    background: #fff;
    border: 3px solid #f0eee4;
    border-top-color: #848478;
    border-left-color: #848478;
}

.pick select {
    appearance: none;
    width: 100%;
    border: none;
    border-radius: 0;
    padding: 0 0 0 3px;
    background: #fff;
    font: inherit;
    color: #000;
}

.pick svg {
    position: absolute;
    right: 0;
    top: 0;
    width: 32px;
    height: 35px;
    padding: 8px;
    background: #e8e6d6;
    border: 2px solid #fff;
    border-right-color: #848478;
    border-bottom-color: #848478;
    pointer-events: none;
}

/* task bar */
.taskbar {
    display: flex;
    align-items: stretch;
    height: 65px;
    padding-top: 8px;
    color: #fff;
    background: linear-gradient(#6ca4dc, #2e80ec 3px, #2c78e4 7px, #1c60cc 9px, #4490f0 11px, #2860dc 18px, #2460dc 55px, #1c48b8);
    flex: none;
}

.start {
    width: 193px;
    display: flex;
    align-items: center;
    gap: 8px;
    padding-left: 20px;
    border-radius: 0 14px 22px 0;
    background: linear-gradient(#2c7c34, #74b878 5px, #3c983c 14px, #349434 40px, #2c7c2c);
    box-shadow: inset -6px 0 8px #1c641c;
    font: italic 900 36px/48px Lato, sans-serif;
    text-shadow: 2px 2px 2px #1c4c1c;
}

.start svg {
    width: 40px;
    height: 40px;
}

.dots {
    width: 12px;
    margin: 12px 14px 4px 18px;
    background:
        radial-gradient(circle, #0c34a8 2px, transparent 3px) 0 0 / 10px 14px,
        radial-gradient(circle, #5c94f8 1px, transparent 2px) 3px 3px / 10px 14px;
    flex: none;
}

.quick {
    display: flex;
    align-items: center;
    width: 488px;
    gap: 14px;
}

.quick .raq {
    align-self: flex-start;
    margin-left: 16px;
    color: #a8d0ff;
    font-size: 28px;
    line-height: 36px;
}

.tasks {
    flex: 1;
    display: flex;
    gap: 2px;
    padding: 7px 0 3px;
}

.tasks button {
    flex: 1;
    display: flex;
    align-items: center;
    gap: 6px;
    padding-left: 18px;
    border-radius: 5px;
    background: linear-gradient(#6ca4ff, #4488fc 6px, #3c7cf4 36px, #3068dc);
}

.tasks .active {
    background: linear-gradient(#103c90, #1c50b8 6px, #1c4cb4);
}

.lang {
    display: flex;
    align-items: center;
    width: 150px;
    gap: 16px;
    margin-left: -5px;
}

.en {
    padding: 0 3px;
    line-height: 32px;
    background: #3068c8;
}

.lang .resize {
    width: 22px;
    height: 38px;
    margin-left: 4px;
}

.tray {
    display: flex;
    align-items: center;
    gap: 5px;
    width: 257px;
    background: linear-gradient(#1858b8, #28b0f8 4px, #1494ec 12px, #1290e8 40px, #18a4f0 50px, #1070c8);
    border-left: 2px solid #0c3c98;
}

.hide {
    width: 36px;
    height: 36px;
    margin: 0 -5px 0 -18px;
    border-radius: 50%;
    border: 2px solid #b8e0ff;
    background: radial-gradient(circle at 35% 30%, #58c0ff, #0c60d0);
}

.hide svg {
    width: 32px;
    height: 32px;
}

.tray time {
    margin-left: 8px;
}
```

FILE: model.js
```javascript
const svg = document.getElementById('model');
const NS = 'http://www.w3.org/2000/svg';

const YELLOW = '#e6e600';
const BRIGHT = '#ffff00';
const DARK = '#b4b400';
const DEEP = '#8c8c00';
const GRAY = '#848484';

function add(tag, attrs) {
    const el = document.createElementNS(NS, tag);
    for (const k in attrs) el.setAttribute(k, attrs[k]);
    svg.appendChild(el);
}

function line(a, b, color, width) {
    add('path', { d: `M${a[0]} ${a[1]}L${b[0]} ${b[1]}`, stroke: color, 'stroke-width': width, fill: 'none' });
}

function poly(pts, fill, stroke) {
    add('polygon', { points: pts.map(p => p.join(',')).join(' '), fill: fill, stroke: stroke || GRAY, 'stroke-width': 2 });
}

// tubes: dark edge with a bright core
function strut(a, b, width) {
    line(a, b, DARK, width);
    line(a, b, BRIGHT, width - 2);
}

// grid box, u along the roof, v across, w up
const B = [655, 1129], E = [1709, 711], F = [541, 805], N = [571, 730];
const ka = 0.78, kb = 0.505, kc = -0.14;

function grid(u, v, w) {
    const d = 1 + ka * u + kb * v + kc * w;
    return [0, 1].map(i => Math.round((B[i]
        + u * (E[i] * (1 + ka) - B[i])
        + v * (F[i] * (1 + kb) - B[i])
        + w * (N[i] * (1 + kc) - B[i])) / d));
}

for (let i = 0; i <= 11; i++) {
    const v = i / 11;
    for (const w of [0, 0.57, 1]) line(grid(0, v, w), grid(1, v, w), GRAY, 1.7);
    line(grid(0, v, 0), grid(0, v, 1), GRAY, 1.7);
    line(grid(1, v, 0), grid(1, v, 1), GRAY, 1.7);
}
for (const w of [0, 0.3, 0.57, 0.8, 1]) {
    line(grid(0, 0, w), grid(0, 1, w), GRAY, 1.7);
}
for (const w of [0, 0.57, 1]) {
    line(grid(1, 0, w), grid(1, 1, w), GRAY, 1.7);
}

// nearest and farthest roof arch, the others lie between them
const near = [[613,913],[665,914],[705,909],[750,896],[800,873],[846,846],[1113,633],[1140,616],[1173,605],[1200,604],[1222,611],[1288,647],[1310,652],[1340,647],[1372,628],[1450,543],[1465,533],[1484,528],[1505,530],[1520,537],[1647,595],[1673,602],[1695,597],[1718,584],[1735,572]];
const far = [[496,628],[531,631],[567,630],[603,622],[634,609],[656,598],[855,466],[873,455],[899,450],[922,455],[943,466],[992,489],[1014,495],[1037,493],[1056,483],[1108,434],[1121,422],[1140,415],[1162,415],[1180,422],[1300,472],[1325,480],[1348,478],[1366,470],[1382,462]];
const straight = [5, 10, 14, 19];

// k = 7 nearest, k = 1 farthest
function archPoint(k, i) {
    const t = (7 - k) / 6;
    const b = 0.567 - 0.27 * i / 24;
    return [0, 1].map(j => (near[i][j] + t * (far[i][j] * (1 + b) - near[i][j])) / (1 + b * t));
}

function unit(a, b) {
    const l = Math.hypot(b[0] - a[0], b[1] - a[1]);
    return [(b[0] - a[0]) / l, (b[1] - a[1]) / l];
}

function arch(k) {
    const p = near.map((_, i) => archPoint(k, i));
    const tan = p.map((q, i) => {
        if (straight.includes(i) || i === 0) return unit(q, p[i + 1]);
        if (straight.includes(i - 1) || i === 24) return unit(p[i - 1], q);
        const a = unit(p[i - 1], q), b = unit(q, p[i + 1]);
        return [(a[0] + b[0]) / 2, (a[1] + b[1]) / 2];
    });
    const out = [];
    for (let i = 0; i < 24; i++) {
        const len = Math.hypot(p[i + 1][0] - p[i][0], p[i + 1][1] - p[i][1]);
        const n = straight.includes(i) ? 1 : i < 5 ? 2 : 3;
        for (let s = 0; s < n; s++) {
            const t = s / n, t2 = t * t, t3 = t2 * t;
            out.push([0, 1].map(j => (2 * t3 - 3 * t2 + 1) * p[i][j] + (t3 - 2 * t2 + t) * len * tan[i][j]
                + (3 * t2 - 2 * t3) * p[i + 1][j] + (t3 - t2) * len * tan[i + 1][j]));
        }
    }
    out.push(p[24]);

    // hatched underside of the falling parts
    for (const i of [10, 19]) {
        const a = p[i], b = p[i + 1], m = i === 10 ? 3 : 7;
        poly([a, b, [b[0], b[1] + m + 2], [a[0], a[1] + m + 5]], YELLOW);
        line([a[0], a[1] + m], [b[0], b[1] + m], GRAY, 2);
    }

    const size = (5 + k * 0.5);
    for (let s = 0; s < out.length - 1; s++) {
        const a = out[s], b = out[s + 1];
        const h = size * (1 - 0.3 * s / out.length) - 1;
        const h2 = size * (1 - 0.3 * (s + 1) / out.length) - 1;
        line([a[0], a[1] + 1], [b[0], b[1] + 1], GRAY, 2 * h + 4);
        const d0 = unit(out[Math.max(0, s - 1)], out[s + 1]);
        const d1 = unit(a, out[Math.min(out.length - 1, s + 2)]);
        poly([
            [a[0] + d0[1] * h, a[1] - d0[0] * h], [b[0] + d1[1] * h2, b[1] - d1[0] * h2],
            [b[0] - d1[1] * h2, b[1] + d1[0] * h2], [a[0] - d0[1] * h, a[1] + d0[0] * h]
        ], YELLOW);
    }
}

// restraint symbol under a support
function base(x, y, s) {
    add('path', {
        d: `M${x - s} ${y - s * 0.7}v${s * 1.5}l${s * 0.6} ${-s * 0.3}l${s * 1.2} ${s * 0.5}v${-s * 1.9}l${-s * 0.4} ${s * 0.5}h${-s}zM${x - s * 0.5} ${y - s * 0.4}l${s} ${s}M${x + s * 0.6} ${y - s * 0.5}l${-s * 1.1} ${s}`,
        stroke: '#00f020', 'stroke-width': 2, fill: 'none'
    });
}

function leftBase(x, y, s) {
    add('path', {
        d: `M${x} ${y - s * 0.3}l${s * 1.9} ${-s * 0.6}l${s * 0.2} ${s}l${-s * 1.9} ${s * 0.6}zM${x} ${y}l${-s * 1.8} ${s * 0.5}l${s * 0.2} ${s}l${s * 1.8} ${-s * 0.6}zM${x} ${y - s}l${s * 0.8} ${s * 2.8}`,
        stroke: '#00f020', 'stroke-width': 2, fill: 'none'
    });
}

// piers: x1, x2, top, bottom
const leftPiers = { 7: [1238,1270,749,865], 6: [1181,1211,710,820], 5: [1129,1159,676,780], 4: [1083,1112,645,744], 3: [1042,1070,618,712], 2: [1005,1031,594,684] };
const rightPiers = { 7: [1320,1350,719,834], 6: [1257,1287,682,788], 5: [1202,1231,651,752], 4: [1157,1181,620,723], 3: [1111,1137,596,692], 2: [1071,1094,578,665] };

function pier(p, k) {
    const side = 3 + k / 2;
    const x1 = p[0], x2 = p[1], y1 = p[2], y2 = p[3];
    base((x1 + x2) / 2 - 5, y2 + 8, 7 + k * 0.8);
    poly([[x1 - side, y1 - 2], [x1, y1], [x1 - 2, y2], [x1 - side - 3, y2 - 2]], '#cccc00');
    poly([[x1, y1 + 1], [x2, y1 - 6], [x2 - 4, y2 - 7], [x1 - 2, y2]], YELLOW);
}

const rightBases = { 7: [1630,724], 6: [1566,695], 5: [1507,668], 4: [1453,644], 3: [1403,622], 2: [1359,603] };
const rightTops = { 7: [1673,608], 6: [1605,587], 5: [1542,567], 4: [1485,545], 3: [1433,523], 2: [1382,505] };
const peaks = { 7: [1473,542], 6: [1403,508], 5: [1338,492], 4: [1282,472], 3: [1230,452], 2: [1182,436], 1: [1142,418] };
const crowns = { 7: [1173,612], 6: [1110,577], 5: [1055,545], 4: [1007,518], 3: [962,494], 2: [925,472], 1: [894,458] };
const feet = { 7: [749,1049], 6: [713,978], 5: [686,920], 4: [661,868], 3: [638,824], 2: [618,783] };
const heads = { 7: [635,905], 6: [608,846], 5: [585,788], 4: [564,739], 3: [546,697], 2: [528,661], 1: [514,631] };

const ends = [[1382,467], [1723,575]];

for (let k = 2; k <= 7; k++) {
    base(rightBases[k][0], rightBases[k][1], 7 + k * 0.6);
    strut(rightTops[k], [rightBases[k][0] + 3, rightBases[k][1] - 10], 4 + k * 0.4);
}

for (let k = 1; k <= 7; k++) {
    if (k > 1) {
        leftBase(feet[k][0] + 3, feet[k][1] + 10, 4 + k);
        line([heads[k - 1][0] - 2, heads[k - 1][1] + 4], [feet[k][0] - 8, feet[k][1] - 12], DEEP, 4);
        line(heads[k - 1], feet[k], DARK, 7);
        line(heads[k - 1], feet[k], '#e8e800', 3);
        line(heads[k], feet[k], DARK, 7);
        line([heads[k][0] + 2, heads[k][1]], feet[k], YELLOW, 3);

        pier(rightPiers[k], k);
        const l = leftPiers[k], r = rightPiers[k];
        poly([[l[0] + 14, l[2] - 6], [r[0] + 18, r[2] - 6], [r[0] + 18, r[2] + 9], [l[0] + 24, l[2] + 6]], YELLOW);
        poly([[l[0] + 14, l[2] - 6], [r[0] + 14, r[2] - 9], [r[0] + 18, r[2] - 4], [l[0] + 30, l[2] - 5]], DARK);
        pier(l, k);

        const head = [r[0] + 18, r[2] - 5];
        strut(peaks[k], head, 5);
        strut(peaks[k - 1], head, 5);

        const top = [l[0] + 15, l[2] - 5];
        line([crowns[k - 1][0] - 12, crowns[k - 1][1] + 4], [top[0] - 6, top[1]], DARK, 3);
        line(crowns[k - 1], [top[0] - 4, top[1]], DARK, 6);
        line(crowns[k - 1], [top[0] - 4, top[1]], BRIGHT, 3);
        line(crowns[k], top, DEEP, 7);
        line([crowns[k][0] - 2, crowns[k][1]], [top[0] - 1, top[1]], '#cccc00', 4);
    }
    arch(k);
}

// beam that ties the right ends together
line(ends[0], ends[1], DARK, 6);
line(ends[0], ends[1], '#dcdc00', 2);
[[1655,553,1668,596], [1590,534,1597,564], [1530,515,1534,536], [1476,499,1479,516], [1426,483,1428,498], [1379,470,1382,482]].forEach(s => strut([s[0], s[1]], [s[2], s[3]], 5));
```
